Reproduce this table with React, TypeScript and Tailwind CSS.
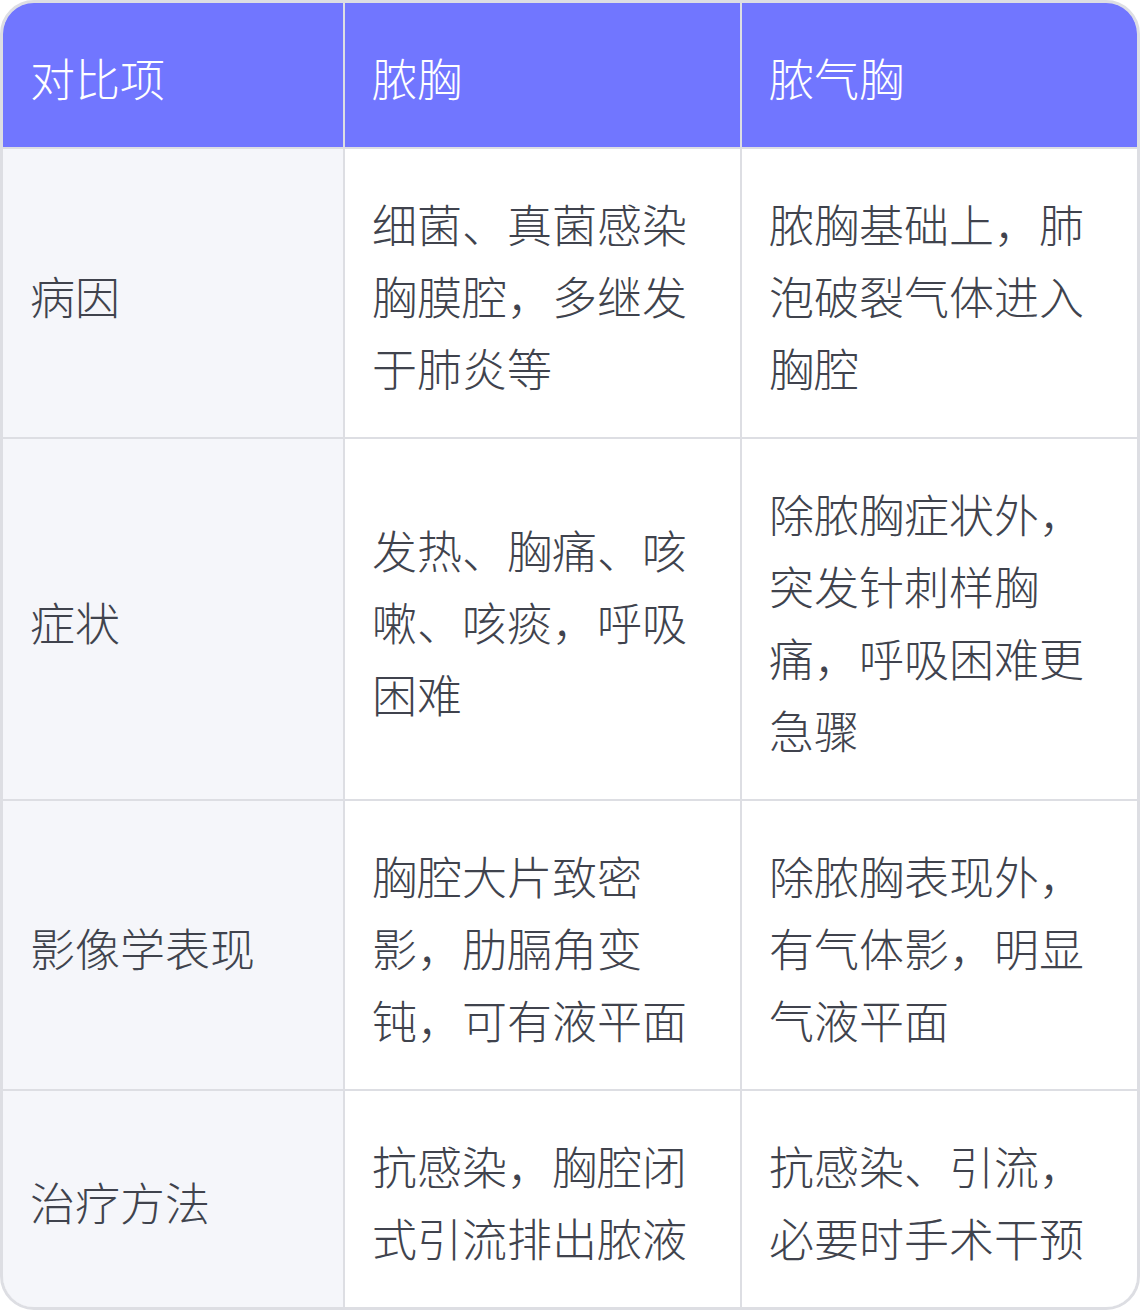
import React from "react";

const rows: [string, string, string][] = [
  ["病因", "细菌、真菌感染胸膜腔，多继发于肺炎等", "脓胸基础上，肺泡破裂气体进入胸腔"],
  ["症状", "发热、胸痛、咳嗽、咳痰，呼吸困难", "除脓胸症状外，突发针刺样胸痛，呼吸困难更急骤"],
  ["影像学表现", "胸腔大片致密影，肋膈角变钝，可有液平面", "除脓胸表现外，有气体影，明显气液平面"],
  ["治疗方法", "抗感染，胸腔闭式引流排出脓液", "抗感染、引流，必要时手术干预"],
];

export default function App() {
  return (
    <div
      className="w-[1140px] h-[1310px] bg-white"
      style={{ fontFamily: '"Noto Sans CJK SC", "Noto Sans", sans-serif' }}
    >
      <div className="w-[1140px] border-[3px] border-[#dddee3] rounded-[34px] overflow-hidden">
        <div className="grid grid-cols-[340px_395px_395px] gap-[2px] bg-[#dddee3] text-[45px] leading-[72px] font-light">
          {["对比项", "脓胸", "脓气胸"].map((h) => (
            <div key={h} className="bg-[#7176ff] text-white pt-[39px] pb-[33px] px-[27px] flex items-center">
              {h}
            </div>
          ))}
          {rows.map((r) => (
            <React.Fragment key={r[0]}>
              <div className="bg-[#f5f6fa] text-[#40434d] pt-[39px] pb-[33px] px-[27px] flex items-center">
                {r[0]}
              </div>
              <div className="bg-white text-[#40434d] pt-[39px] pb-[33px] px-[27px] flex items-center">
                <span>{r[1]}</span>
              </div>
              <div className="bg-white text-[#40434d] pt-[39px] pb-[33px] px-[27px] flex items-center">
                <span>{r[2]}</span>
              </div>
            </React.Fragment>
          ))}
        </div>
      </div>
    </div>
  );
}
